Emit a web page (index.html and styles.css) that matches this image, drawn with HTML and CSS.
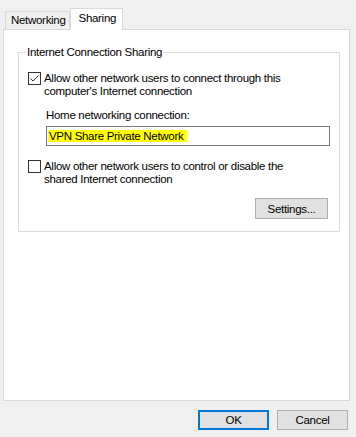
FILE: index.html
```html
<!DOCTYPE html>
<html lang="en">
<head>
  <meta charset="UTF-8">
  <title>Sharing</title>
  <link rel="stylesheet" href="styles.css">
</head>
<body>
  <div class="dialog">
    <div class="tabs">
      <div class="tab">Networking</div>
      <div class="tab active">Sharing</div>
    </div>
    <div class="panel">
      <fieldset class="group">
        <legend>Internet Connection Sharing</legend>
        <label class="check">
          <span class="box">
            <svg width="11" height="11" viewBox="0 0 11 11"><path d="M1.5 5.5 L4 8 L9.5 2.5" fill="none" stroke="#333" stroke-width="1"/></svg>
          </span>
          <span class="check-text">Allow other network users to connect through this<br>computer's Internet connection</span>
        </label>
        <div class="home">
          <div class="home-label">Home networking connection:</div>
          <div class="field"><span class="selected">VPN Share Private Network</span></div>
        </div>
        <label class="check second">
          <span class="box"></span>
          <span class="check-text">Allow other network users to control or disable the<br>shared Internet connection</span>
        </label>
        <div class="group-actions">
          <button class="btn">Settings...</button>
        </div>
      </fieldset>
    </div>
    <div class="footer">
      <button class="btn default">OK</button>
      <button class="btn">Cancel</button>
    </div>
  </div>
</body>
</html>
```

FILE: styles.css
```css
html, body {
  margin: 0;
  padding: 0;
  height: 100%;
}
body {
  background: #f0f0f0;
  font-family: 'Liberation Sans', Arial, sans-serif;
  font-size: 11.5px;
  letter-spacing: -0.3px;
  color: #000;
}
.dialog {
  height: 437px;
  display: flex;
  flex-direction: column;
  padding: 8px 6px 0 3px;
  box-sizing: border-box;
}
.tabs {
  display: flex;
  align-items: flex-end;
  padding-left: 2px;
  height: 21px;
}
.tab {
  border: 1px solid #d9d9d9;
  border-bottom: none;
  height: 18px;
  line-height: 17px;
  padding: 0 3px 0 5px;
  box-sizing: border-box;
  background: #f0f0f0;
}
.tab.active {
  position: relative;
  z-index: 1;
  height: 22px;
  line-height: 18px;
  margin-bottom: -1px;
  padding: 0 6px 0 8px;
  background: #fff;
}
.panel {
  height: 372px;
  box-sizing: border-box;
  border: 1px solid #d9d9d9;
  background: #fff;
  padding: 15px 11px 0 14px;
}
.group {
  margin: 0;
  border: 1px solid #dcdcdc;
  padding: 13px 9px 12px 9px;
}
.group legend {
  padding: 0 1px;
  margin-left: -2px;
  line-height: 14px;
}
.check {
  display: flex;
  align-items: flex-start;
  gap: 3px;
  line-height: 13px;
  white-space: nowrap;
}
.box {
  flex: none;
  width: 13px;
  height: 13px;
  box-sizing: border-box;
  border: 1px solid #333;
  background: #fff;
  display: flex;
  align-items: center;
  justify-content: center;
}
.home {
  padding: 10px 0 0 18px;
}
.home-label {
  line-height: 14px;
  margin-bottom: 4px;
}
.field {
  height: 20px;
  box-sizing: border-box;
  border: 1px solid #7a7a7a;
  padding: 2px 0 0 1px;
  line-height: 14px;
  width: 284px;
}
.selected {
  background: #ffff00;
  padding: 0 4px 0 1px;
}
.check.second {
  margin-top: 14px;
}
.group-actions {
  display: flex;
  justify-content: flex-end;
  padding-top: 12px;
  padding-right: 2px;
}
.btn {
  font-family: inherit;
  font-size: 11.5px;
  letter-spacing: -0.3px;
  background: #e1e1e1;
  border: 1px solid #adadad;
  color: #000;
  width: 73px;
  height: 21px;
  padding: 0;
}
.footer {
  display: flex;
  justify-content: flex-end;
  gap: 8px;
  padding-top: 9px;
  padding-right: 2px;
}
.footer .btn {
  width: 71px;
  height: 20px;
}
.btn.default {
  border: 2px solid #0078d7;
}
```
